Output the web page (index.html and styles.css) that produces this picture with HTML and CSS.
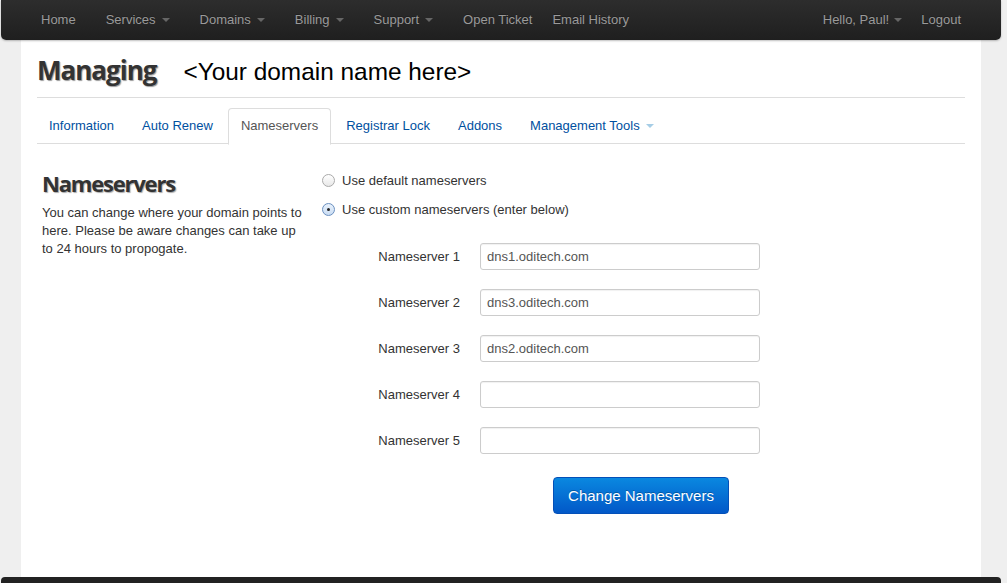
FILE: index.html
```html
<!DOCTYPE html>
<html>
<head>
<meta charset="utf-8">
<link rel="stylesheet" href="styles.css">
</head>
<body>
<div class="page">
  <div class="navbar">
    <ul class="nav">
      <li><a>Home</a></li>
      <li><a>Services<b class="caret"></b></a></li>
      <li><a>Domains<b class="caret"></b></a></li>
      <li><a>Billing<b class="caret"></b></a></li>
      <li><a>Support<b class="caret"></b></a></li>
      <li><a>Open Ticket</a></li>
      <li class="tight"><a>Email History</a></li>
    </ul>
    <ul class="nav">
      <li class="user"><a>Hello, Paul!<b class="caret"></b></a></li>
      <li><a>Logout</a></li>
    </ul>
  </div>
  <div class="panel">
    <div class="page-header">
      <h1>Managing</h1>
      <span class="domain">&lt;Your domain name here&gt;</span>
    </div>
    <ul class="tabs">
      <li><a>Information</a></li>
      <li><a>Auto Renew</a></li>
      <li class="active"><a>Nameservers</a></li>
      <li><a>Registrar Lock</a></li>
      <li><a>Addons</a></li>
      <li><a>Management Tools<b class="caret blue"></b></a></li>
    </ul>
    <div class="content">
      <div class="side">
        <h2>Nameservers</h2>
        <p>You can change where your domain points to here. Please be aware changes can take up to 24 hours to propogate.</p>
      </div>
      <div class="main">
        <label class="radio"><span class="dot"></span>Use default nameservers</label>
        <label class="radio"><span class="dot checked"></span>Use custom nameservers (enter below)</label>
        <div class="fields">
          <div class="row"><span class="lbl">Nameserver 1</span><span class="input">dns1.oditech.com</span></div>
          <div class="row"><span class="lbl">Nameserver 2</span><span class="input">dns3.oditech.com</span></div>
          <div class="row"><span class="lbl">Nameserver 3</span><span class="input">dns2.oditech.com</span></div>
          <div class="row"><span class="lbl">Nameserver 4</span><span class="input"></span></div>
          <div class="row"><span class="lbl">Nameserver 5</span><span class="input"></span></div>
        </div>
        <div class="actions"><button class="btn">Change Nameservers</button></div>
      </div>
    </div>
  </div>
  <div class="footer-bar"></div>
</div>
</body>
</html>
```
FILE: styles.css
```css
* { box-sizing: border-box; }
html, body { margin: 0; padding: 0; }
body {
  background: #efefef;
  font-family: "Liberation Sans", Arial, sans-serif;
  font-size: 13px;
  color: #333;
  width: 1007px;
  height: 583px;
  overflow: hidden;
}
.page {
  position: relative;
  height: 583px;
  display: flex;
  flex-direction: column;
}
.navbar {
  position: absolute;
  top: 0;
  left: 1px;
  width: 1000px;
  height: 40px;
  background: linear-gradient(#2d2d2d, #1f1f1f);
  border-radius: 0 0 5px 5px;
  box-shadow: 0 1px 2px rgba(0,0,0,0.25);
  display: flex;
  justify-content: space-between;
  padding: 0 25px;
  z-index: 2;
}
.nav { list-style: none; margin: 0; padding: 0; display: flex; }
.nav a {
  display: flex;
  align-items: center;
  height: 40px;
  padding: 0 15px 1px;
  color: #9a9a9a;
  font-size: 13px;
  text-shadow: 0 -1px 0 rgba(0,0,0,0.25);
}
.nav li.tight { margin-left: -10px; }
.nav li.user a { padding-right: 4px; padding-left: 17px; }
.nav li.user .caret { margin-left: 5px; }
.caret {
  display: inline-block;
  width: 0; height: 0;
  margin-left: 6px;
  margin-top: 1px;
  border-left: 4px solid transparent;
  border-right: 4px solid transparent;
  border-top: 4px solid #666;
}
.caret.blue { border-top-color: #a6cde6; margin-left: 6px; }
.panel {
  margin: 0 26px 0 21px;
  background: #fff;
  flex: 1;
  padding: 52px 16px 0;
}
.page-header {
  display: flex;
  align-items: baseline;
  border-bottom: 1px solid #ddd;
  height: 46px;
}
.page-header h1 {
  margin: 0;
  font-family: "Open Sans", sans-serif;
  font-weight: 700;
  font-size: 26px;
  letter-spacing: -1px;
  color: #333;
  text-shadow: 1px 1px 1px #999;
  line-height: 36px;
}
.domain {
  margin-left: 27px;
  font-size: 24.4px;
  color: #000;
}
.tabs {
  list-style: none;
  margin: 10px 0 0;
  padding: 0;
  display: flex;
  border-bottom: 1px solid #ddd;
  height: 36px;
}
.tabs li { margin-right: 2px; }
.tabs li:first-child { margin-left: -1px; }
.tabs a {
  display: flex;
  align-items: center;
  height: 36px;
  padding: 0 12px 2px;
  color: #0050a0;
  border: 1px solid transparent;
  border-radius: 4px 4px 0 0;
}
.tabs li.active a {
  color: #555;
  background: #fff;
  border-color: #ddd #ddd transparent;
  height: 37px;
  padding-bottom: 3px;
}
.content {
  display: flex;
  padding-top: 25px;
}
.side { width: 285px; padding-left: 5px; }
.side h2 {
  margin: 0;
  font-family: "Open Sans", sans-serif;
  font-weight: 700;
  font-size: 22px;
  letter-spacing: -1.2px;
  color: #333;
  text-shadow: 1px 1px 1px #aaa;
  line-height: 28px;
}
.side p { margin: 7px 0 0; line-height: 18px; width: 264px; }
.main { flex: 1; }
.radio { display: flex; align-items: center; height: 18px; margin-top: 2px; margin-bottom: 11px; }
.radio + .radio { margin-top: 0; }
.dot {
  width: 13px; height: 13px;
  border-radius: 50%;
  border: 1px solid #aaa;
  background: linear-gradient(#fff, #e8e8e8);
  margin-right: 7px;
  position: relative;
}
.dot.checked { border-color: #6a8fbf; background: linear-gradient(#e9f2fc, #c9dcf3); }
.dot.checked::after {
  content: "";
  position: absolute;
  left: 4px; top: 4px;
  width: 3px; height: 3px;
  border-radius: 50%;
  background: #222;
}
.fields { padding-top: 4px; }
.row { display: flex; align-items: center; height: 46px; }
.lbl { width: 158px; text-align: right; padding-right: 20px; }
.input {
  width: 280px; height: 27px;
  border: 1px solid #ccc;
  border-radius: 3px;
  box-shadow: inset 0 1px 1px rgba(0,0,0,0.06);
  padding: 0 6px;
  display: flex; align-items: center;
  color: #555;
}
.actions { padding: 14px 0 0 231px; }
.btn {
  width: 176px; height: 37px;
  border: 1px solid #0450b8;
  border-radius: 4px;
  background: linear-gradient(#0a88e0, #0258c8);
  color: #fff;
  font-family: "Liberation Sans", Arial, sans-serif;
  font-size: 15px;
  text-shadow: 0 -1px 0 rgba(0,0,0,0.25);
  padding: 0;
}
.footer-bar {
  position: absolute;
  left: 1px; bottom: 0;
  width: 1000px; height: 6px;
  background: #222;
  border-radius: 4px 4px 0 0;
}
```
